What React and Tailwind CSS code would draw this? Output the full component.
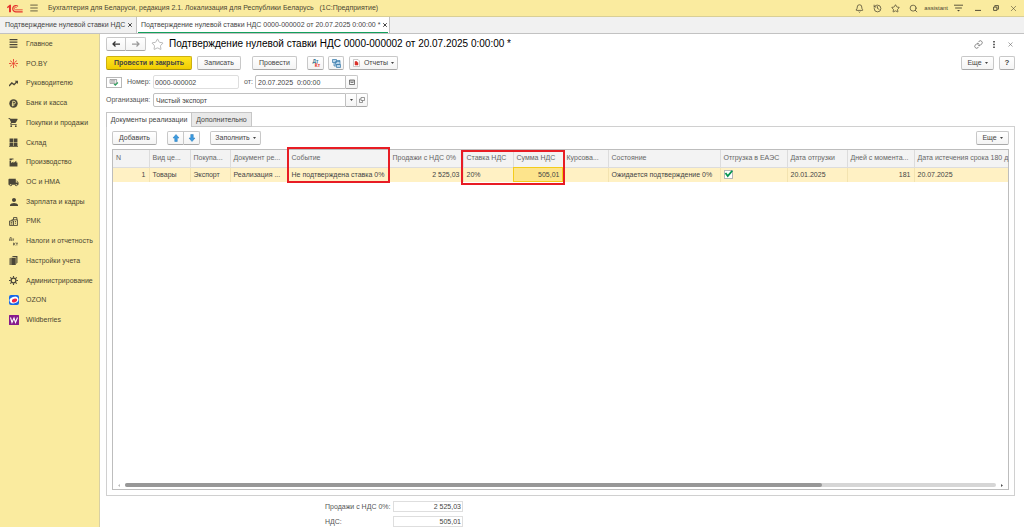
import React, { useState } from 'react';
import { Bell, History, Star, Search, Link as LinkIcon, X, Menu } from 'lucide-react';
import { MdShoppingCart, MdLocalShipping, MdPerson } from 'react-icons/md';

const icons = {
  main: (
    <svg viewBox="0 0 16 16" className="h-[9px] w-[9px]" fill="currentColor">
      <path d="M1 0h14v2H1zM1 4.500h14v2H1zM1 9h14v2H1zM1 13.500h14v2H1z" />
    </svg>
  ),
  po: (
    <svg viewBox="0 0 16 16" className="h-[9px] w-[9px] text-[#e8402f]" fill="none" stroke="currentColor" strokeWidth="1.600">
      <path d="M8 0v5M8 11v5M0 8h4M12 8h4M2 3l4 3M14 3l-4 3M2 13l4-3M14 13l-4-3" />
      <circle cx="8" cy="8" r="1.500" fill="currentColor" />
    </svg>
  ),
  trend: (
    <svg viewBox="0 0 16 16" className="h-[9px] w-[9px]" fill="none" stroke="currentColor" strokeWidth="2.400">
      <path d="M0 12.500 5 7l4 3 5-5" />
      <path d="M10 3h6v6z" fill="currentColor" stroke="none" />
    </svg>
  ),
  bank: (
    <svg viewBox="0 0 16 16" className="h-[9px] w-[9px]">
      <circle cx="8" cy="8" r="7.500" fill="currentColor" />
      <path d="M6.500 13V4h2.500a2.300 2.300 0 0 1 0 4.800H5M5 11h4.500" fill="none" stroke="#faeb9f" strokeWidth="1.500" />
    </svg>
  ),
  cart: <MdShoppingCart className="h-[11px] w-[11px]" />,
  store: (
    <svg viewBox="0 0 16 16" className="h-[9px] w-[9px]" fill="currentColor">
      <path d="M1 1h6.500v6H1zM8.500 1H15v6H8.500zM1 8h6.500v6H1zM8.500 8H15v6H8.500zM0 14h16v1.500H0z" />
    </svg>
  ),
  factory: (
    <svg viewBox="0 0 16 16" className="h-[9px] w-[9px]" fill="currentColor">
      <path d="M1 15V5h2.500l.5 4 4-3v3l5-4v3h2v7zM1 1h7v1.500H5V4H1z" />
    </svg>
  ),
  truck: <MdLocalShipping className="h-[11px] w-[11px]" />,
  person: <MdPerson className="h-[12px] w-[12px]" />,
  register: (
    <svg viewBox="0 0 16 16" className="h-[9px] w-[9px]" fill="none" stroke="currentColor" strokeWidth="1.600">
      <path d="M1 7h7v8H1zM8 15h7V5H5v2M8 5V1h6v4M3 10h3M3 12.500h3M10.500 8h2M10.500 11h2" />
    </svg>
  ),
  taxes: (
    <svg viewBox="0 0 16 16" className="h-[9px] w-[9px]" fill="none" stroke="currentColor" strokeWidth="1.200">
      <path d="M0 7V5.500h5V7M1 5.500 2 1h2v4.500M6 3.500h3M7.500 3.500V7M8 10v5M8 12.500h1l2-2.500M9 12.500l2 2.500M12 11h4M14 11v4" />
    </svg>
  ),
  books: (
    <svg viewBox="0 0 16 16" className="h-[9px] w-[9px]" fill="currentColor">
      <path d="M1 4l2-1v13H1zM4 3h8v13H4zM5 1.500 7 0h8v12l-2 2V2z" />
    </svg>
  ),
  gear: (
    <svg viewBox="0 0 16 16" className="h-[9px] w-[9px]" fill="none" stroke="currentColor">
      <circle cx="8" cy="8" r="4.200" strokeWidth="2.200" />
      <path d="M8 0v3M8 13v3M0 8h3M13 8h3M2.300 2.300l2.200 2.200M11.500 11.500l2.200 2.200M13.700 2.300l-2.200 2.200M4.500 11.500l-2.200 2.200" strokeWidth="2" />
    </svg>
  ),
  ozon: (
    <svg viewBox="0 0 20 20" className="h-[10px] w-[10px]">
      <rect width="20" height="20" rx="4" fill="#1767e8" />
      <ellipse cx="10" cy="10" rx="9" ry="6.500" transform="rotate(-20 10 10)" fill="#fff" />
      <ellipse cx="11" cy="11" rx="5.500" ry="3.500" transform="rotate(-20 11 11)" fill="#ee2346" />
    </svg>
  ),
  wb: (
    <svg viewBox="0 0 20 20" className="h-[10px] w-[10px]">
      <rect width="20" height="20" rx="1" fill="#861b8c" />
      <path d="M3 5l3 10 4-9 3 9 4-10" fill="none" stroke="#fff" strokeWidth="2.200" />
    </svg>
  ),
};

const sections = [
  { icon: 'main', label: 'Главное' },
  { icon: 'po', label: 'PO.BY' },
  { icon: 'trend', label: 'Руководителю' },
  { icon: 'bank', label: 'Банк и касса' },
  { icon: 'cart', label: 'Покупки и продажи' },
  { icon: 'store', label: 'Склад' },
  { icon: 'factory', label: 'Производство' },
  { icon: 'truck', label: 'ОС и НМА' },
  { icon: 'person', label: 'Зарплата и кадры' },
  { icon: 'register', label: 'РМК' },
  { icon: 'taxes', label: 'Налоги и отчетность' },
  { icon: 'books', label: 'Настройки учета' },
  { icon: 'gear', label: 'Администрирование' },
  { icon: 'ozon', label: 'OZON' },
  { icon: 'wb', label: 'Wildberries' },
];

const columns = [
  { title: 'N', value: '1', width: 'w-[36px]', right: true },
  { title: 'Вид ценности', short: 'Вид це...', value: 'Товары', width: 'w-[41px]' },
  { title: 'Покупатель', short: 'Покупа...', value: 'Экспорт', width: 'w-[40px]' },
  { title: 'Документ реализации', short: 'Документ ре...', value: 'Реализация ...', width: 'w-[58px]' },
  { title: 'Событие', value: 'Не подтверждена ставка 0%', width: 'w-[101px]', mark: 'event' },
  { title: 'Продажи с НДС 0%', value: '2 525,03', width: 'w-[74px]', right: true },
  { title: 'Ставка НДС', value: '20%', width: 'w-[50px]', mark: 'vat' },
  { title: 'Сумма НДС', value: '505,01', width: 'w-[50px]', right: true, active: true },
  { title: 'Курсовая разница', short: 'Курсова...', value: '', width: 'w-[45px]' },
  { title: 'Состояние', value: 'Ожидается подтверждение 0%', width: 'w-[112px]' },
  { title: 'Отгрузка в ЕАЭС', check: true, width: 'w-[67px]' },
  { title: 'Дата отгрузки', value: '20.01.2025', width: 'w-[60px]' },
  { title: 'Дней с момента отгрузки', short: 'Дней с момента...', value: '181', width: 'w-[67px]', right: true },
  { title: 'Дата истечения срока 180 дней', short: 'Дата истечения срока 180 д', value: '20.07.2025', width: 'w-auto' },
];

function Button({ children, primary, className = '', ...rest }) {
  const look = primary
    ? 'border-[#cdb011] border-b-[#a8900c] bg-linear-to-b from-[#ffe41e] to-[#f0cd00] font-bold'
    : 'border-[#c8c8c8] border-b-[#a8a8a8] bg-linear-to-b from-white to-[#f4f4f4]';

  return (
    <button
      className={`flex h-[14px] items-center justify-center rounded-[2px] border whitespace-nowrap text-[#444] ${look} ${className}`}
      {...rest}
    >
      {children}
    </button>
  );
}

function Caret() {
  return (
    <svg viewBox="0 0 6 4" className="ml-[3px] h-[2px] w-[3px] shrink-0" fill="#444">
      <path d="M0 0h6L3 4z" />
    </svg>
  );
}

function Arrow({ className }) {
  return (
    <svg viewBox="0 0 16 12" className={`h-[6px] w-[8px] ${className}`} fill="none" stroke="currentColor" strokeWidth="2.500">
      <path d="M16 6H2M7 1 2 6l5 5" />
    </svg>
  );
}

function BlueArrow({ className = '' }) {
  return (
    <svg viewBox="0 0 16 16" className={`h-[8px] w-[8px] ${className}`} fill="#3d9be0" stroke="#2478b8">
      <path d="M8 1 14 8h-3.500v7h-5V8H2z" />
    </svg>
  );
}

function Logo() {
  return (
    <svg viewBox="0 0 48 27" className="h-[9px] w-[16px]" fill="none" stroke="#e5322d">
      <path d="M0 9 8 2h4v23H6V10L1 13z" fill="#e5322d" stroke="none" />
      <path d="M33 7a9.500 9.500 0 1 0-7 16.500h21" strokeWidth="3.500" />
      <path d="M29 11a4 4 0 1 0-3 6.500h21" strokeWidth="2.500" />
    </svg>
  );
}

function TitleBar() {
  return (
    <header className="flex h-[17px] shrink-0 items-center border-b border-[#d9cf96] bg-[#faeb9f] pl-[7px] text-[#4b4632]">
      <Logo />
      <button aria-label="Меню" className="ml-[6px]">
        <Menu className="h-[10px] w-[10px]" strokeWidth={2} />
      </button>
      <div className="ml-[9px] text-[7px] whitespace-pre">
        Бухгалтерия для Беларуси, редакция 2.1. Локализация для Республики Беларусь   (1С:Предприятие)
      </div>
      <div className="ml-auto flex items-center pr-[6px]">
        <div className="flex items-center gap-[9px]">
          <button aria-label="Уведомления"><Bell className="h-[9px] w-[9px]" /></button>
          <button aria-label="История"><History className="h-[9px] w-[9px]" /></button>
          <button aria-label="Избранное"><Star className="h-[9px] w-[9px]" /></button>
          <button aria-label="Поиск"><Search className="h-[9px] w-[9px]" /></button>
        </div>
        <span className="ml-[6px] text-[6px]">assistant</span>
        <button aria-label="Настройки" className="ml-[6px]">
          <svg viewBox="0 0 16 14" className="h-[8px] w-[9px]" fill="none" stroke="currentColor" strokeWidth="1.600">
            <path d="M0 2h16M2 7h12" />
            <path d="M5.500 10.500h5L8 13z" fill="currentColor" stroke="none" />
          </svg>
        </button>
        <button aria-label="Свернуть" className="ml-[12px]">
          <svg viewBox="0 0 10 10" className="h-[6px] w-[6px]" stroke="currentColor" strokeWidth="1.600"><path d="M0 9h10" /></svg>
        </button>
        <button aria-label="Восстановить" className="ml-[12px]">
          <svg viewBox="0 0 10 10" className="h-[6px] w-[6px]" fill="none" stroke="currentColor" strokeWidth="1.500"><path d="M1 3.500h5.500V9H1zM3 3V1h6v6H7" /></svg>
        </button>
        <button aria-label="Закрыть" className="ml-[10px]"><X className="h-[9px] w-[9px]" strokeWidth={1.5} /></button>
      </div>
    </header>
  );
}

function WindowTabs() {
  return (
    <nav className="flex h-[17px] shrink-0 border-b border-[#c2c2c2] bg-[#f1f1f1] text-[#444]">
      <div className="flex w-[137px] items-center border-r border-[#c2c2c2] pl-[5px]">
        <a href="#list" className="whitespace-nowrap">Подтверждение нулевой ставки НДС</a>
        <button aria-label="Закрыть вкладку" className="ml-[2px]"><X className="h-[6px] w-[6px]" strokeWidth={4} /></button>
      </div>
      <div className="flex w-[253px] border-r border-[#c2c2c2] bg-white px-[1px]">
        <div className="flex flex-1 items-center border-b border-[#12a05c] pl-[3px]">
          <a href="#document" className="whitespace-nowrap">Подтверждение нулевой ставки НДС 0000-000002 от 20.07.2025 0:00:00 *</a>
          <button aria-label="Закрыть вкладку" className="ml-[2px]"><X className="h-[6px] w-[6px]" strokeWidth={4} /></button>
        </div>
      </div>
    </nav>
  );
}

function Sidebar() {
  return (
    <aside className="w-[100px] shrink-0 border-r border-[#d8d0a4] bg-[#faeb9f] text-[#4b4632]">
      <ul className="flex h-[296px] flex-col">
        {sections.map((item) => (
          <li key={item.label} className="flex flex-1">
            <a href="#section" className="flex items-center whitespace-nowrap">
              <span className="ml-[7px] flex w-[13px] items-center justify-center text-[#4a4638]">{icons[item.icon]}</span>
              <span className="ml-[6px]">{item.label}</span>
            </a>
          </li>
        ))}
      </ul>
    </aside>
  );
}

function FormHeader() {
  return (
    <div className="flex h-[14px] items-center">
      <div className="flex">
        <Button aria-label="Назад" className="w-[20px] rounded-r-none"><Arrow className="text-[#333]" /></Button>
        <Button aria-label="Вперед" className="w-[20px] rounded-l-none border-l-0"><Arrow className="rotate-180 text-[#999]" /></Button>
      </div>
      <button aria-label="В избранное" className="ml-[5px]"><Star className="h-[13px] w-[13px] text-[#aaa]" strokeWidth={1.5} /></button>
      <h1 className="ml-[5px] text-[10px] whitespace-nowrap text-black">
        Подтверждение нулевой ставки НДС 0000-000002 от 20.07.2025 0:00:00 *
      </h1>
      <div className="ml-auto flex items-center pr-[1px] text-[#666]">
        <button aria-label="Получить ссылку"><LinkIcon className="h-[9px] w-[9px]" /></button>
        <button aria-label="Еще действия" className="ml-[10px]">
          <svg viewBox="0 0 4 14" className="h-[7px] w-[2px]" fill="currentColor"><path d="M0 0h4v3H0zM0 5.500h4v3H0zM0 11h4v3H0z" /></svg>
        </button>
        <button aria-label="Закрыть" className="ml-[12px]"><X className="h-[7px] w-[7px]" /></button>
      </div>
    </div>
  );
}

function CommandBar() {
  return (
    <div className="mt-[5px] flex">
      <Button primary className="w-[86px]">Провести и закрыть</Button>
      <Button className="ml-[5px] w-[44px]">Записать</Button>
      <Button className="ml-[11px] w-[45px]">Провести</Button>
      <Button aria-label="Проводки" className="ml-[10px] w-[17px]">
        <span className="flex flex-col text-[5px] leading-[4px] font-bold">
          <span className="text-[#3a7694]">Дт</span>
          <span className="ml-[4px] text-[#e5322d]">Кт</span>
        </span>
      </Button>
      <Button aria-label="Структура подчиненности" className="ml-[4px] w-[16px]">
        <svg viewBox="0 0 18 18" className="h-[9px] w-[9px]" fill="#b9d5ea" stroke="#3f7fae" strokeWidth="1.500">
          <path d="M1 1h8v6H1zM9 11h8v6H9zM4 7v7h5M7 5h9v6H7zM9 3h7v2" />
        </svg>
      </Button>
      <Button className="ml-[5px] w-[49px]">
        <svg viewBox="0 0 14 16" className="mr-[4px] h-[8px] w-[7px]" fill="#fff" stroke="#999">
          <path d="M1 1h9l3 3v11H1z" />
          <path d="M4 5h4v2h2v5H4z" fill="#d8322b" stroke="#d8322b" />
        </svg>
        Отчеты
        <Caret />
      </Button>
      <Button className="ml-auto w-[33px]">Еще<Caret /></Button>
      <Button aria-label="Справка" className="ml-[5px] w-[16px] text-[8px] font-bold">?</Button>
    </div>
  );
}

function Fields() {
  const box = 'h-[14px] border bg-white text-[#444] outline-none';
  return (
    <>
      <div className="mt-[5px] flex items-center">
        <button aria-label="Статус" className="flex h-[11px] w-[16px] items-center justify-center border border-[#b8b8b8]">
          <svg viewBox="0 0 20 16" className="h-[7px] w-[10px]" fill="none" stroke="#777" strokeWidth="1.500">
            <path d="M1 1h15v9H1zM3 4h10M3 7h10" />
            <path d="M10 11l3 3 6-6" stroke="#2ea25f" strokeWidth="2.500" />
          </svg>
        </button>
        <label htmlFor="number" className="ml-[5px] w-[26px]">Номер:</label>
        <input id="number" defaultValue="0000-000002" className={`${box} w-[86px] rounded-[2px] border-[#dedede] px-[1px]`} />
        <label htmlFor="date" className="ml-[5px] w-[11px]">от:</label>
        <input id="date" defaultValue="20.07.2025  0:00:00" className={`${box} w-[91px] rounded-l-[2px] border-[#c0c0c0] px-[2px]`} />
        <Button aria-label="Календарь" className="w-[12px] rounded-l-none border-l-0">
          <svg viewBox="0 0 12 12" className="h-[6px] w-[6px]" fill="none" stroke="#555" strokeWidth="1.500">
            <path d="M1 2h10v9H1zM1 4h10M3 7h6" />
          </svg>
        </Button>
      </div>
      <div className="mt-[4px] flex items-center">
        <label htmlFor="organization" className="w-[47px]">Организация:</label>
        <input id="organization" defaultValue="Чистый экспорт" className={`${box} w-[193px] rounded-l-[2px] border-[#c0c0c0] px-[2px]`} />
        <Button aria-label="Выбрать" className="w-[11px] rounded-none border-l-0">
          <svg viewBox="0 0 6 4" className="h-[2px] w-[3px]" fill="#444"><path d="M0 0h6L3 4z" /></svg>
        </Button>
        <Button aria-label="Открыть" className="w-[11px] rounded-l-none border-l-0">
          <svg viewBox="0 0 12 12" className="h-[6px] w-[6px]" fill="none" stroke="#666" strokeWidth="1.300">
            <path d="M4 1h7v6H4zM4 4H1v7h6V7" />
          </svg>
        </Button>
      </div>
    </>
  );
}

function SalesTable() {
  const [eaeu, setEaeu] = useState(true);

  return (
    <div className="mt-[4px] flex flex-1 flex-col border border-[#bdbdbd] bg-white">
      <table className="w-full table-fixed border-collapse text-left">
        <thead>
          <tr className="h-[17px] bg-[#f3f3f3] text-[#666]">
            {columns.map((col) => (
              <th key={col.title} title={col.title} className={`relative border-r border-b border-[#dcdcdc] p-0 font-normal last:border-r-0 ${col.width}`}>
                <div className="pl-[3px] whitespace-nowrap">{col.short || col.title}</div>
                {/* Highlight frames */}
                {col.mark === 'event' && <div className="pointer-events-none absolute -top-[3px] -left-[2px] z-10 h-[36px] w-[103px] border-2 border-[#e81c24]" />}
                {col.mark === 'vat' && <div className="pointer-events-none absolute top-0 -left-[3px] z-10 h-[35px] w-[104px] border-2 border-[#e81c24]" />}
              </th>
            ))}
          </tr>
        </thead>
        <tbody>
          <tr className="h-[15px] bg-[#fff1c4] text-[#444]">
            {columns.map((col) => (
              <td
                key={col.title}
                className={`border-r border-[#f3e3b0] p-0 last:border-r-0 ${col.right ? 'text-right' : ''} ${col.active ? 'bg-[#fde48c] outline outline-1 -outline-offset-1 outline-[#f3cc1c]' : ''}`}
              >
                {col.check ? (
                  <label className="relative ml-[3px] block h-[9px] w-[9px]">
                    <input
                      type="checkbox"
                      aria-label={col.title}
                      checked={eaeu}
                      onChange={() => setEaeu(!eaeu)}
                      className="block h-[9px] w-[9px] appearance-none border border-[#b5b5b5] bg-white"
                    />
                    {eaeu && (
                      <svg viewBox="0 0 12 12" className="pointer-events-none absolute inset-0 h-[9px] w-[9px]" fill="none" stroke="#069550" strokeWidth="2.400">
                        <path d="M2 4l3 4 6-7" />
                      </svg>
                    )}
                  </label>
                ) : (
                  <div className="px-[3px] whitespace-nowrap">{col.value}</div>
                )}
              </td>
            ))}
          </tr>
        </tbody>
      </table>

      {/* Horizontal scroll */}
      <div className="mt-auto flex h-[8px] items-center px-[5px]">
        <svg viewBox="0 0 4 6" className="h-[3px] w-[2px]" fill="#bbb"><path d="M4 0v6L0 3z" /></svg>
        <div className="mx-[5px] h-[4px] flex-1 rounded-full bg-[#d6d6d6]">
          <div className="h-full w-4/5 rounded-full bg-[#979797]" />
        </div>
        <svg viewBox="0 0 4 6" className="h-[3px] w-[2px]" fill="#555"><path d="M0 0v6l4-3z" /></svg>
      </div>
    </div>
  );
}

function Totals() {
  const box = 'h-[11px] w-[70px] border border-[#dedede] bg-white px-[1px] text-right text-[#444]';
  return (
    <div className="mt-[5px] ml-[219px] flex flex-col gap-[4px]">
      <div className="flex items-center">
        <label htmlFor="total-sales" className="w-[68px]">Продажи с НДС 0%:</label>
        <input id="total-sales" readOnly value="2 525,03" className={box} />
      </div>
      <div className="flex items-center">
        <label htmlFor="total-vat" className="w-[68px]">НДС:</label>
        <input id="total-vat" readOnly value="505,01" className={box} />
      </div>
    </div>
  );
}

function App() {
  return (
    <div className="flex min-h-screen flex-col bg-white font-['Liberation_Sans',Arial,sans-serif] text-[7px] leading-[10px] text-[#555]">
      <TitleBar />
      <WindowTabs />
      <div className="flex flex-1">
        <Sidebar />
        <main className="flex min-w-0 flex-1 flex-col pt-[3px] pr-[9px] pl-[6px]">
          <FormHeader />
          <CommandBar />
          <Fields />

          {/* Document tabs */}
          <div className="z-10 mt-[5px] -mb-px flex" role="tablist">
            <button role="tab" aria-selected="true" className="h-[15px] w-[86px] border border-b-0 border-[#c6c6c6] bg-white text-[#444]">Документы реализации</button>
            <button role="tab" aria-selected="false" className="h-[15px] w-[60px] border border-l-0 border-[#c6c6c6] bg-[#e9e9e9] text-[#444]">Дополнительно</button>
          </div>
          <section className="flex flex-1 flex-col border border-[#d0d0d0] px-[5px] pt-[4px] pb-[5px]">
            <div className="flex">
              <Button className="w-[45px]">Добавить</Button>
              <Button aria-label="Переместить вверх" className="ml-[10px] w-[17px] rounded-r-none"><BlueArrow /></Button>
              <Button aria-label="Переместить вниз" className="w-[16px] rounded-l-none border-l-0"><BlueArrow className="rotate-180" /></Button>
              <Button className="ml-[10px] w-[51px]">Заполнить<Caret /></Button>
              <Button className="ml-auto w-[33px]">Еще<Caret /></Button>
            </div>
            <SalesTable />
          </section>
          <Totals />
        </main>
      </div>
    </div>
  );
}

export default App;
